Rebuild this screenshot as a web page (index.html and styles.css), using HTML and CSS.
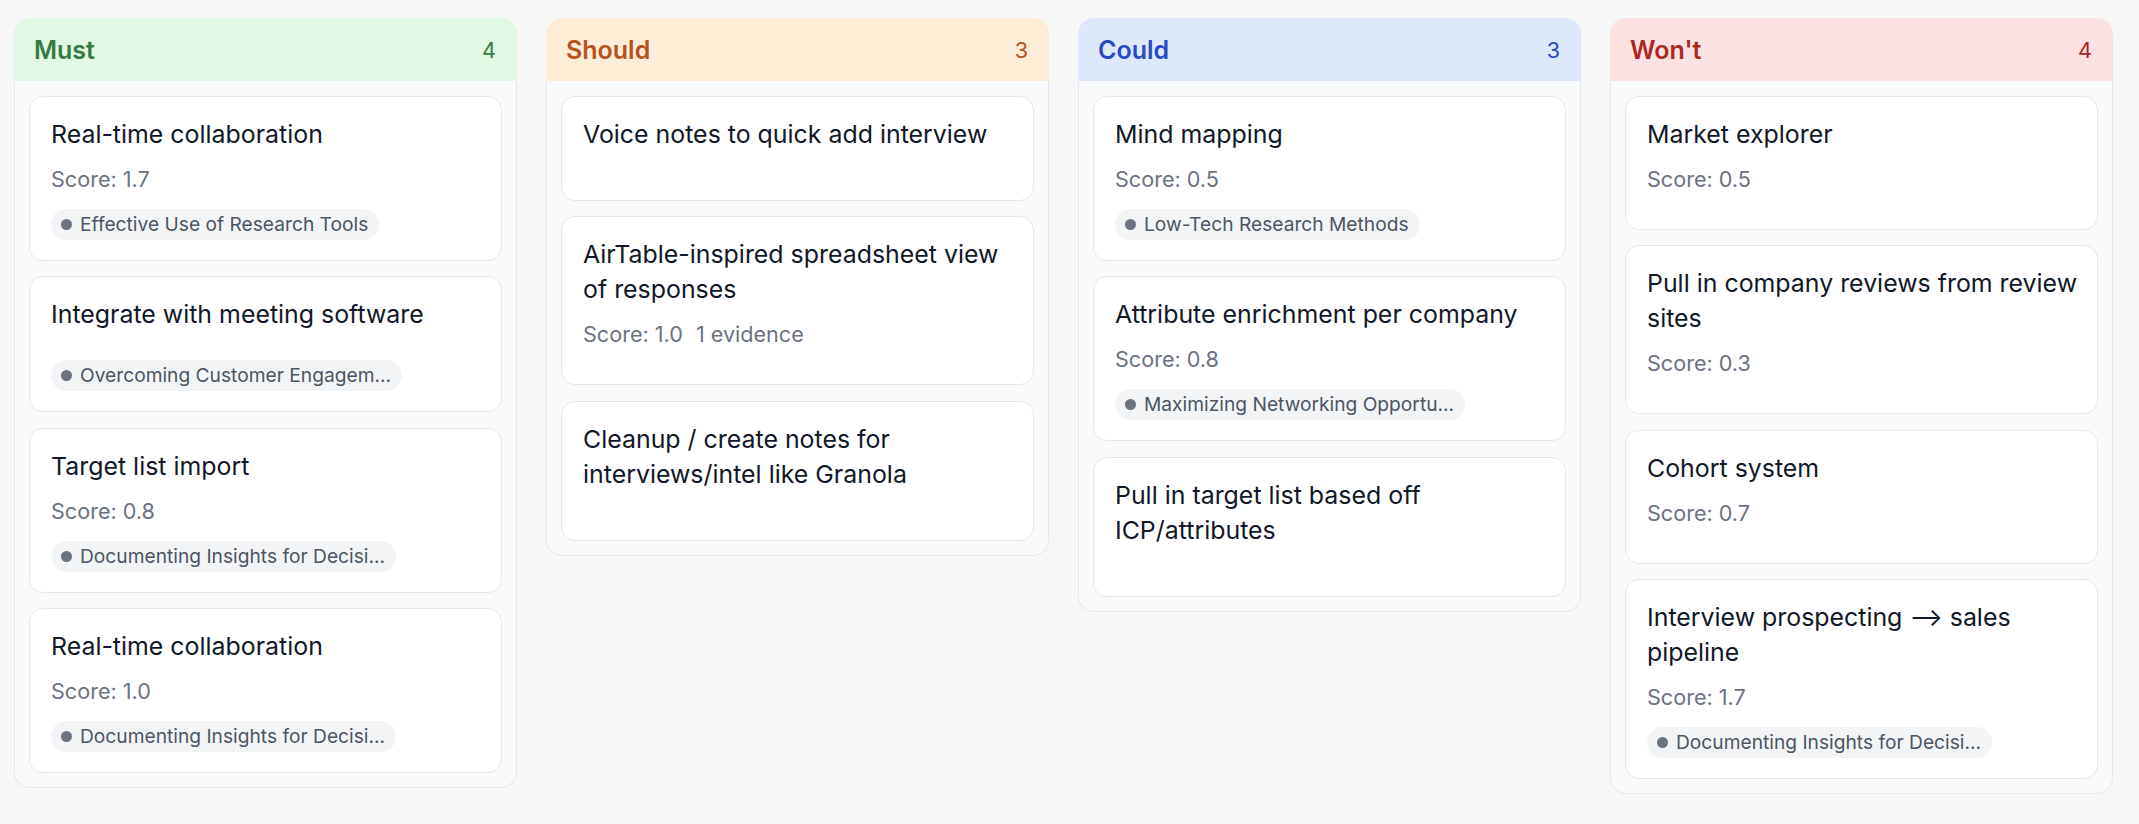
FILE: index.html
```html
<!DOCTYPE html>
<html lang="en">
<head>
<meta charset="utf-8">
<title>MoSCoW board</title>
<link rel="stylesheet" href="styles.css">
</head>
<body>
<main class="board">
  <section class="column must">
    <header class="col-head"><span class="col-title">Must</span><span class="col-count">4</span></header>
    <div class="col-body">
      <article class="card">
        <h3 class="card-title">Real-time collaboration</h3>
        <div class="meta"><span>Score: 1.7</span></div>
        <div class="chip"><span class="dot"></span><span class="chip-text">Effective Use of Research Tools</span></div>
      </article>
      <article class="card">
        <h3 class="card-title">Integrate with meeting software</h3>
        <div class="meta"></div>
        <div class="chip"><span class="dot"></span><span class="chip-text">Overcoming Customer Engagem...</span></div>
      </article>
      <article class="card">
        <h3 class="card-title">Target list import</h3>
        <div class="meta"><span>Score: 0.8</span></div>
        <div class="chip"><span class="dot"></span><span class="chip-text">Documenting Insights for Decisi...</span></div>
      </article>
      <article class="card">
        <h3 class="card-title">Real-time collaboration</h3>
        <div class="meta"><span>Score: 1.0</span></div>
        <div class="chip"><span class="dot"></span><span class="chip-text">Documenting Insights for Decisi...</span></div>
      </article>
    </div>
  </section>

  <section class="column should">
    <header class="col-head"><span class="col-title">Should</span><span class="col-count">3</span></header>
    <div class="col-body">
      <article class="card">
        <h3 class="card-title">Voice notes to quick add interview</h3>
        <div class="meta"></div>
      </article>
      <article class="card">
        <h3 class="card-title">AirTable-inspired spreadsheet view of responses</h3>
        <div class="meta"><span>Score: 1.0</span><span>1 evidence</span></div>
      </article>
      <article class="card">
        <h3 class="card-title">Cleanup / create notes for interviews/intel like Granola</h3>
        <div class="meta"></div>
      </article>
    </div>
  </section>

  <section class="column could">
    <header class="col-head"><span class="col-title">Could</span><span class="col-count">3</span></header>
    <div class="col-body">
      <article class="card">
        <h3 class="card-title">Mind mapping</h3>
        <div class="meta"><span>Score: 0.5</span></div>
        <div class="chip"><span class="dot"></span><span class="chip-text">Low-Tech Research Methods</span></div>
      </article>
      <article class="card">
        <h3 class="card-title">Attribute enrichment per company</h3>
        <div class="meta"><span>Score: 0.8</span></div>
        <div class="chip"><span class="dot"></span><span class="chip-text">Maximizing Networking Opportu...</span></div>
      </article>
      <article class="card">
        <h3 class="card-title">Pull in target list based off ICP/attributes</h3>
        <div class="meta"></div>
      </article>
    </div>
  </section>

  <section class="column wont">
    <header class="col-head"><span class="col-title">Won't</span><span class="col-count">4</span></header>
    <div class="col-body">
      <article class="card">
        <h3 class="card-title">Market explorer</h3>
        <div class="meta"><span>Score: 0.5</span></div>
      </article>
      <article class="card">
        <h3 class="card-title">Pull in company reviews from review sites</h3>
        <div class="meta"><span>Score: 0.3</span></div>
      </article>
      <article class="card">
        <h3 class="card-title">Cohort system</h3>
        <div class="meta"><span>Score: 0.7</span></div>
      </article>
      <article class="card">
        <h3 class="card-title">Interview prospecting ⟶ sales pipeline</h3>
        <div class="meta"><span>Score: 1.7</span></div>
        <div class="chip"><span class="dot"></span><span class="chip-text">Documenting Insights for Decisi...</span></div>
      </article>
    </div>
  </section>
</main>
</body>
</html>
```

FILE: styles.css
```css
* {
  box-sizing: border-box;
}

html, body {
  margin: 0;
  padding: 0;
}

body {
  background: #f7f7f7;
  font-family: Inter, "Noto Sans", "Liberation Sans", sans-serif;
  color: #111827;
}

.board {
  display: flex;
  align-items: flex-start;
  gap: 29px;
  padding: 18px 0 0 14px;
}

.column {
  flex: none;
  width: 503px;
}

.col-head {
  height: 63px;
  padding: 0 21px 0 20px;
  display: flex;
  align-items: center;
  justify-content: space-between;
  border-radius: 16px 16px 0 0;
}

.col-title {
  font-size: 25px;
  font-weight: 600;
}

.col-count {
  font-size: 21.6px;
  font-weight: 400;
}

.must .col-head { background: #e0f8e4; color: #367a42; }
.should .col-head { background: #fdecd6; color: #b4531c; }
.could .col-head { background: #dee8fb; color: #2949c4; }
.wont .col-head { background: #fbe1e1; color: #a8291f; }

.col-body {
  background: #f9fafb;
  border: 1px solid #e6e8eb;
  border-top: none;
  border-radius: 0 0 16px 16px;
  padding: 14.7px 14px 14px;
  display: flex;
  flex-direction: column;
  gap: 15.5px;
}

.card {
  background: #ffffff;
  border: 1px solid #e5e7eb;
  border-radius: 14px;
  padding: 20px 16px 20px 21px;
}

.card-title {
  margin: 0;
  font-size: 24.9px;
  line-height: 35px;
  font-weight: 400;
  color: #111827;
}

.meta {
  margin: 13px 0 15px;
  display: flex;
  gap: 13px;
  font-size: 21.6px;
  line-height: 29px;
  color: #6b7280;
}

.chip {
  display: flex;
  align-items: center;
  gap: 8px;
  width: fit-content;
  max-width: 360px;
  height: 31px;
  padding: 0 11px 0 10px;
  border-radius: 999px;
  background: #f3f4f6;
}

.dot {
  flex: none;
  width: 11px;
  height: 11px;
  border-radius: 50%;
  background: #6b7280;
}

.chip-text {
  font-size: 19.2px;
  line-height: 31px;
  color: #4b5563;
  white-space: nowrap;
  overflow: hidden;
  text-overflow: ellipsis;
}
```
